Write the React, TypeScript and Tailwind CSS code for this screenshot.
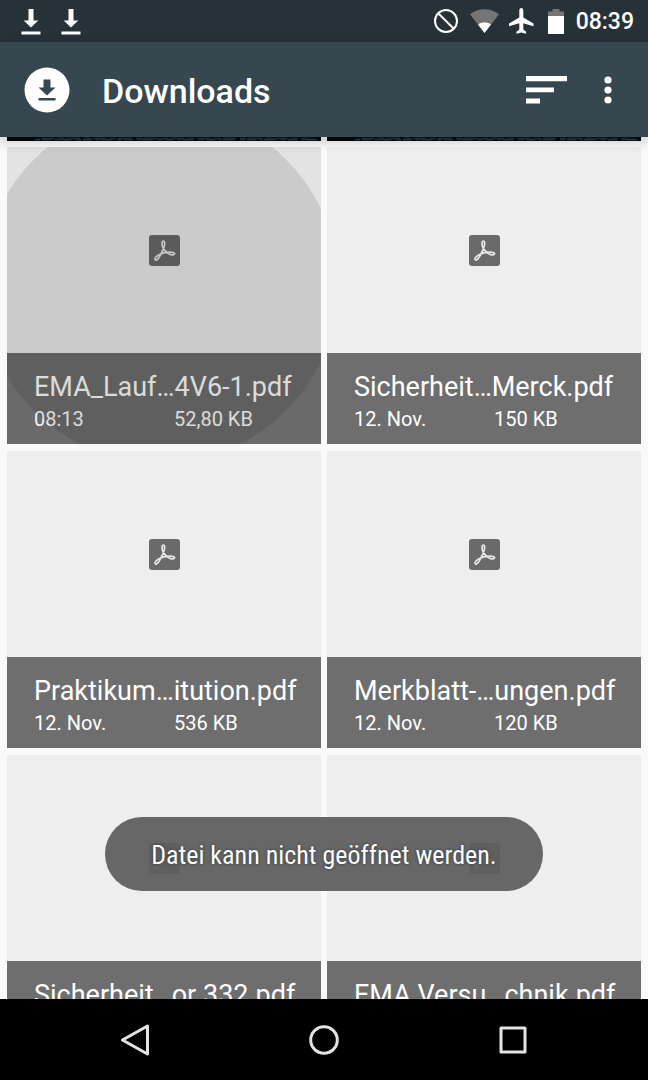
type PdfFile = { name: string; date: string; size: string; pressed?: boolean };

const files: PdfFile[] = [
  { name: "EMA_Lauf…4V6-1.pdf", date: "08:13", size: "52,80 KB", pressed: true },
  { name: "Sicherheit…Merck.pdf", date: "12. Nov.", size: "150 KB" },
  { name: "Praktikum…itution.pdf", date: "12. Nov.", size: "536 KB" },
  { name: "Merkblatt-…ungen.pdf", date: "12. Nov.", size: "120 KB" },
  { name: "Sicherheit…or 332.pdf", date: "12. Nov.", size: "148 KB" },
  { name: "EMA Versu…chnik.pdf", date: "12. Nov.", size: "212 KB" },
];

function DownloadNotice() {
  return (
    <svg className="h-[27px] w-5" viewBox="0 0 20 27" fill="#fff" aria-hidden="true">
      <path d="M7.5 1h5v11.5h4.800L10 19.500 2.700 12.500h4.800z" />
      <path d="M0.500 23.500h19v3h-19z" />
    </svg>
  );
}

function StatusBar() {
  return (
    <div className="flex h-[42px] shrink-0 items-center bg-[#263238] pr-3.5 pl-[21px]">
      <div className="flex gap-5">
        <DownloadNotice />
        <DownloadNotice />
      </div>
      <div className="ml-auto flex items-center">
        <svg className="mr-3 h-6 w-6" viewBox="0 0 24 24" fill="none" stroke="#fff" strokeWidth="2" aria-hidden="true">
          <circle cx="12" cy="12" r="11" />
          <path d="M4.200 4.200l15.600 15.600" />
        </svg>
        <svg className="mr-2.5 h-6 w-[29px]" viewBox="0 0 29 24" aria-hidden="true">
          <path d="M0 5.200C8.500-1.500 20.500-1.500 29 5.200L14.500 24z" fill="#757575" />
          <path d="M8 15.400C11.600 12.800 17.400 12.800 21 15.400L14.500 24z" fill="#fff" />
        </svg>
        <svg className="mr-3.5 h-[26px] w-[25px]" viewBox="0 0 25 26" fill="#fff" aria-hidden="true">
          <path d="M12.300 0c1.200 0 2 1.200 2 2.600v7l10.200 6v2.600l-10.200-3v6.300l2.800 2.200v2.100l-4.800-1.200-4.800 1.200v-2.100l2.800-2.200v-6.300L0 18.200v-2.600l10.300-6v-7c0-1.400.8-2.600 2-2.600z" />
        </svg>
        <svg className="mr-3 h-[25px] w-4" viewBox="0 0 16 25" aria-hidden="true">
          <path d="M4.500 0h7v2.500H16V7H0V2.500h4.500z" fill="#757575" />
          <path d="M0 7h16v18H0z" fill="#fff" />
        </svg>
        <time className="pt-0.5 text-[23px] font-medium text-white">08:39</time>
      </div>
    </div>
  );
}

function AppBar() {
  return (
    <header className="relative z-10 flex h-[95px] shrink-0 items-center bg-[#37474f] pr-8 pl-6 shadow-[0_4px_12px_rgba(0,0,0,0.22)]">
      <svg className="h-[46px] w-[46px]" viewBox="0 0 46 46" aria-hidden="true">
        <circle cx="23" cy="23" r="22.500" fill="#fff" />
        <path d="M19.500 12.500h7v8h5L23 28.500l-8.500-8h5zM14.500 31h17v2.500h-17z" fill="#37474f" />
      </svg>
      <h1 className="ml-8 pt-0.5 text-[34px] leading-10 font-medium text-white">Downloads</h1>
      <button type="button" aria-label="Sortieren" className="ml-auto">
        <svg className="h-7 w-[41px]" viewBox="0 0 41 28" fill="#fff" aria-hidden="true">
          <path d="M0 0h41v5.300H0zM0 11.500h28v4.800H0zM0 22.500h14v5H0z" />
        </svg>
      </button>
      <button type="button" aria-label="Weitere Optionen" className="ml-8 flex w-[17px] justify-center">
        <svg className="h-7 w-2" viewBox="0 0 8 28" fill="#fff" aria-hidden="true">
          <circle cx="4" cy="4" r="3.600" />
          <circle cx="4" cy="14" r="3.600" />
          <circle cx="4" cy="24" r="3.600" />
        </svg>
      </button>
    </header>
  );
}

function PdfIcon() {
  return (
    <svg className="h-[31px] w-[31px]" viewBox="0 0 31 31" aria-hidden="true">
      <rect width="31" height="31" rx="3" fill="#6a6a6a" />
      <path
        d="M14.500 6.200c-1.700 0-1.700 2.500-1.200 4.600.8 3 3.200 5.800 6 7.700 1.900 1.300 5.700 2.100 6.200.5.500-1.500-2.700-1.900-4.900-1.800-3.700.1-7.700.9-11 2.700-2.100 1.200-4.500 3.600-3.400 4.800 1.300 1.200 3.300-1.300 4.500-3.300 1.900-3.300 3.800-7.200 4.600-10.600.5-2.100.7-4.600-.8-4.600z"
        fill="none"
        stroke="#e6e6e6"
        strokeWidth="1.700"
        strokeLinejoin="round"
      />
    </svg>
  );
}

function FileTile({ file }: { file: PdfFile }) {
  return (
    <a href="#" className="relative block overflow-hidden bg-[#eee]">
      <div className="flex h-[206px] items-center justify-center">
        <PdfIcon />
      </div>
      <div className="h-[91px] bg-[#6e6e6e] px-[27px] pt-[18px] text-white">
        <div className="text-[27px] leading-8 whitespace-nowrap">{file.name}</div>
        <div className="grid grid-cols-[140px_1fr] text-[20px] leading-8">
          <span>{file.date}</span>
          <span>{file.size}</span>
        </div>
      </div>
      {file.pressed && (
        <>
          <span className="absolute inset-0 bg-[#0a2018]/5" />
          <span className="absolute -top-10 -left-[25px] h-[356px] w-[356px] rounded-full bg-black/10" />
        </>
      )}
    </a>
  );
}

function ThumbnailEdge() {
  return (
    <svg className="h-1 w-full bg-[#05080c]" viewBox="0 0 314 4" preserveAspectRatio="none" aria-hidden="true">
      <path d="M28 2.500H314" stroke="#2b363f" strokeWidth="1.500" strokeDasharray="5 2 9 4 3 1 12 5" />
      <path d="M34 1.500H300" stroke="#1a2630" strokeWidth="2" strokeDasharray="13 4 6 3" />
    </svg>
  );
}

function Toast() {
  return (
    <div role="status" className="absolute inset-x-0 bottom-[108px] flex justify-center">
      <div className="flex h-[74px] items-center rounded-full bg-[#5f5f5f]/95 px-[46px] pt-0.5 font-['Roboto_Condensed',Roboto,sans-serif] text-[26px] whitespace-nowrap text-white [text-shadow:0_0_3px_#263238]">
        Datei kann nicht geöffnet werden.
      </div>
    </div>
  );
}

function NavBar() {
  return (
    <nav className="grid h-[81px] shrink-0 grid-cols-3 items-center bg-black px-10">
      <button type="button" aria-label="Zurück" className="flex justify-center">
        <svg className="h-8 w-[30px]" viewBox="0 0 30 32" fill="none" stroke="#e4e4e4" strokeWidth="3" strokeLinejoin="round" aria-hidden="true">
          <path d="M27.500 2v28L2.500 16z" />
        </svg>
      </button>
      <button type="button" aria-label="Startseite" className="flex justify-center">
        <svg className="h-[30px] w-[30px]" viewBox="0 0 30 30" fill="none" stroke="#e4e4e4" strokeWidth="3" aria-hidden="true">
          <circle cx="15" cy="15" r="13.300" />
        </svg>
      </button>
      <button type="button" aria-label="Übersicht" className="flex justify-center">
        <svg className="h-7 w-7" viewBox="0 0 28 28" fill="none" stroke="#e4e4e4" strokeWidth="3" strokeLinejoin="round" aria-hidden="true">
          <path d="M2 2h24v24H2z" />
        </svg>
      </button>
    </nav>
  );
}

export default function App() {
  return (
    <div className="flex h-screen flex-col overflow-hidden bg-[#fafafa] font-[Roboto,sans-serif]">
      <StatusBar />
      <AppBar />
      <main className="relative min-h-0 flex-1 overflow-hidden px-[7px]">
        <div className="relative z-20 mb-1.5 grid grid-cols-2 gap-x-1.5">
          <ThumbnailEdge />
          <ThumbnailEdge />
        </div>
        <div className="grid grid-cols-2 gap-x-1.5 gap-y-[7px]">
          {files.map((file) => (
            <FileTile key={file.name} file={file} />
          ))}
        </div>
        <Toast />
      </main>
      <NavBar />
    </div>
  );
}
